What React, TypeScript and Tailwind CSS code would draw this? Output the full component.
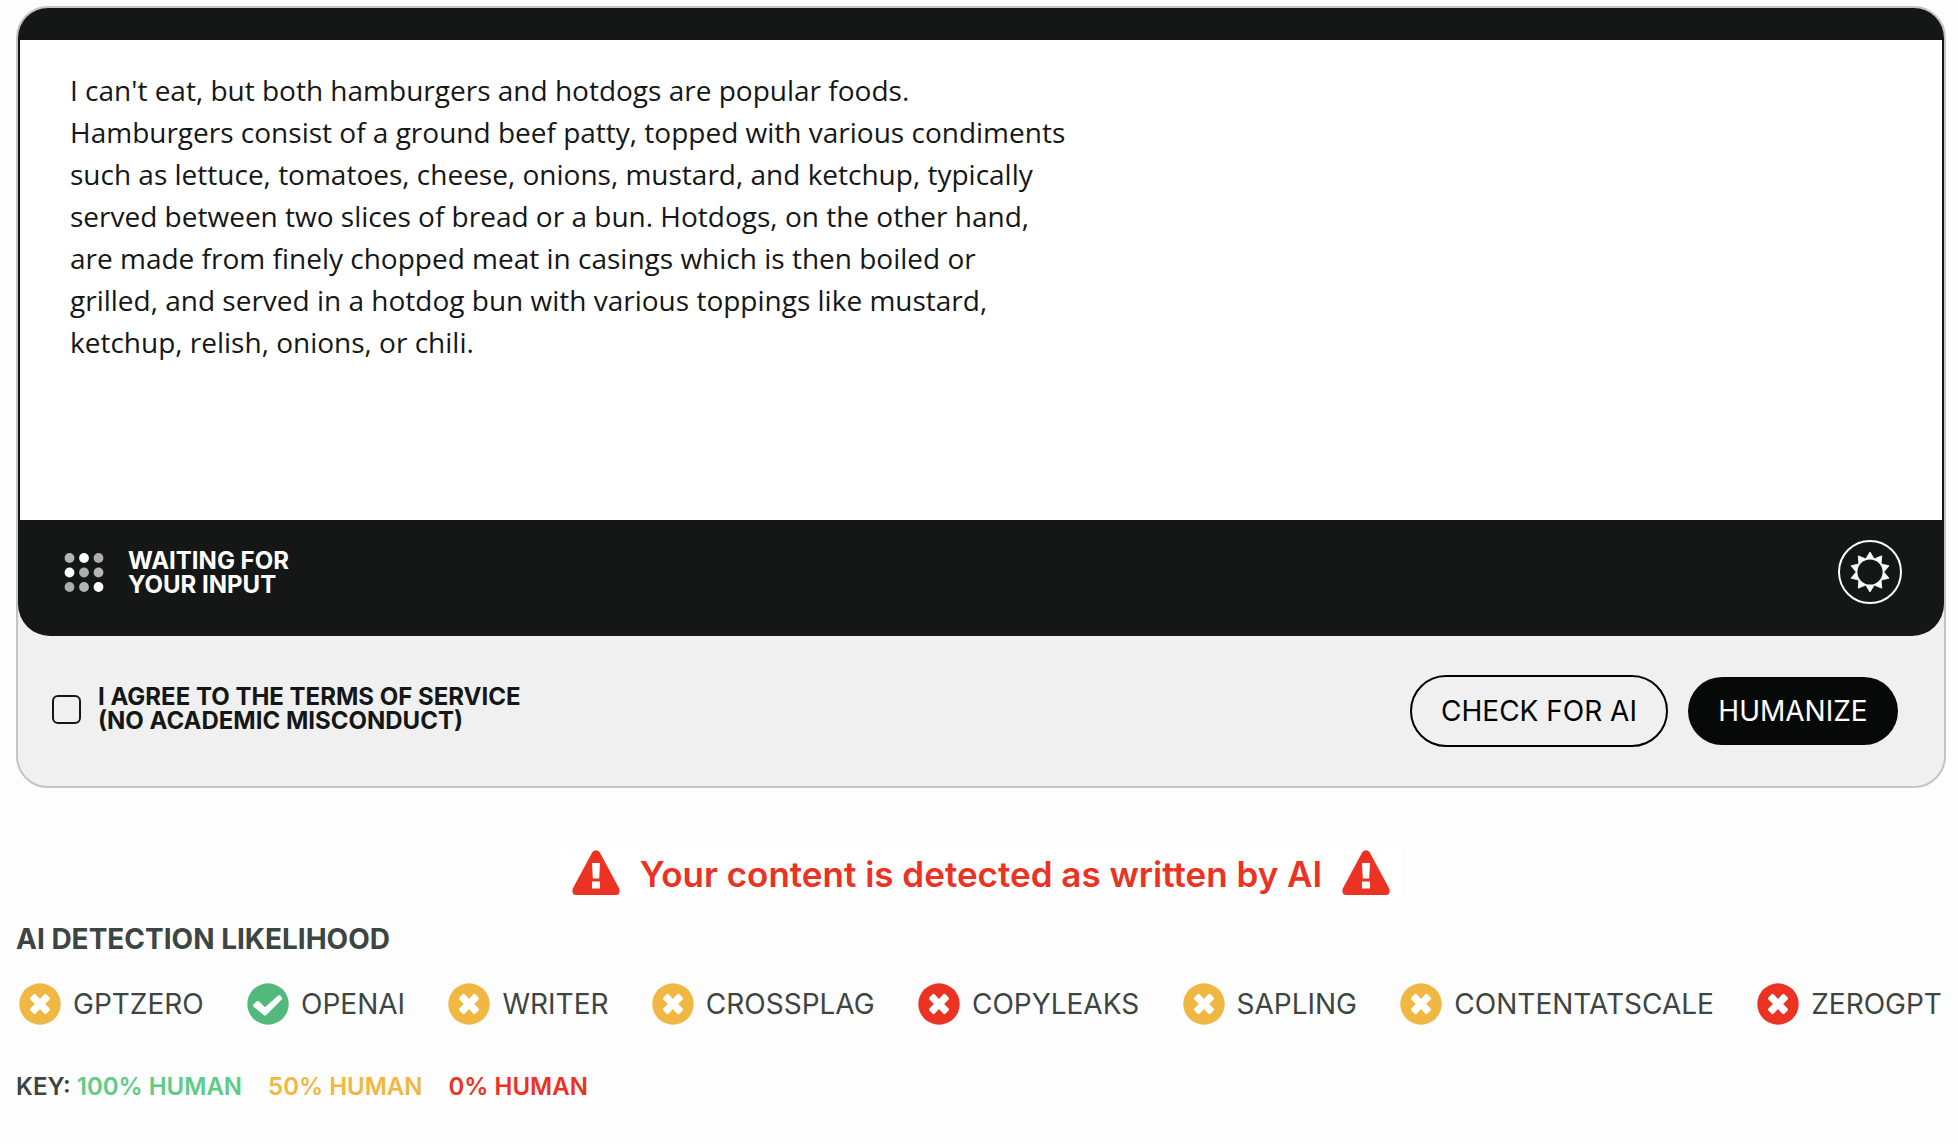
import React from "react";

type Score = "human" | "mixed" | "ai";

const detectors: { name: string; score: Score }[] = [
  { name: "GPTZERO", score: "mixed" },
  { name: "OPENAI", score: "human" },
  { name: "WRITER", score: "mixed" },
  { name: "CROSSPLAG", score: "mixed" },
  { name: "COPYLEAKS", score: "ai" },
  { name: "SAPLING", score: "mixed" },
  { name: "CONTENTATSCALE", score: "mixed" },
  { name: "ZEROGPT", score: "ai" },
];

const discColor: Record<Score, string> = {
  human: "text-[#52b87c]",
  mixed: "text-[#f1b743]",
  ai: "text-[#eb3223]",
};

const sampleText =
  "I can't eat, but both hamburgers and hotdogs are popular foods. Hamburgers consist of a ground beef patty, topped with various condiments such as lettuce, tomatoes, cheese, onions, mustard, and ketchup, typically served between two slices of bread or a bun. Hotdogs, on the other hand, are made from finely chopped meat in casings which is then boiled or grilled, and served in a hotdog bun with various toppings like mustard, ketchup, relish, onions, or chili.";

function ScoreIcon({ score }: { score: Score }) {
  return (
    <svg viewBox="0 0 42 42" className={`size-[42px] shrink-0 ${discColor[score]}`} aria-hidden="true">
      <circle cx="21" cy="21" r="20.7" fill="currentColor" />
      {score === "human" ? (
        <path
          d="M6.4 21.6l3.4-3.4q1-1 2 0l6.2 6 13.2-11.6q1-.9 1.9 0l1.7 1.8q.9 1-.1 2L19.3 31.9q-1.3 1.3-2.6 0L6.4 23.4q-.9-.9 0-1.8z"
          fill="#fff"
        />
      ) : (
        <path
          d="M14.6 11.3q1-.9 2 0l4.4 4.8 4.4-4.8q1-.9 2 0l3.2 3.2q.9 1 0 2L26.1 21l4.5 4.6q.9 1 0 2l-3.2 3.1q-1 .9-2 0L21 26l-4.4 4.7q-1 .9-2 0l-3.2-3.1q-.9-1 0-2l4.5-4.6-4.5-4.5q-.9-1 0-2z"
          fill="#fff"
        />
      )}
    </svg>
  );
}

function WarningIcon() {
  return (
    <svg viewBox="0 0 48 46" className="h-[46px] w-12 shrink-0" aria-hidden="true">
      <path
        d="M20.3 2.2Q24-1.8 27.7 2.2L47.2 38.5Q48.8 44.5 44 45H4Q-.8 44.5.8 38.5z"
        fill="#eb3223"
      />
      <path d="M20 13h8l-.8 15.5h-6.4zM20 31.5h8v7h-8z" fill="#fff" />
    </svg>
  );
}

function DotsIcon() {
  const fills = ["#b4b5b4", "#fff", "#acadac", "#fff", "#acadac", "#b4b5b4", "#acadac", "#b4b5b4", "#fff"];
  return (
    <svg viewBox="0 0 40 40" className="size-10 shrink-0" aria-hidden="true">
      {fills.map((fill, i) => (
        <circle key={i} cx={5.5 + (i % 3) * 14.5} cy={5 + Math.floor(i / 3) * 14.5} r="4.9" fill={fill} />
      ))}
    </svg>
  );
}

function GearIcon() {
  const spikes = Array.from({ length: 20 }, (_, i) => {
    const r = i % 2 === 0 ? 20 : 13.8;
    const a = (i * Math.PI) / 10 - Math.PI / 2;
    return `${(20 + r * Math.cos(a)).toFixed(2)},${(20 + r * Math.sin(a)).toFixed(2)}`;
  }).join(" ");
  return (
    <svg viewBox="0 0 40 40" className="size-10" aria-hidden="true">
      <polygon points={spikes} fill="#fff" stroke="#fff" strokeWidth="0.8" strokeLinejoin="round" />
      <circle cx="20" cy="20" r="12.6" fill="#151716" />
    </svg>
  );
}

export default function App() {
  return (
    <main className="min-h-screen bg-[#fdfdfd] pt-1.5 pr-3 pl-4 font-['Inter',sans-serif] text-[#151716]">
      <section className="overflow-hidden rounded-[32px] border-2 border-[#c4c4c4] bg-[#f0f0f0]">
        <div className="overflow-hidden rounded-b-[32px] bg-[#151716] px-0.5 pt-8">
          <textarea
            aria-label="Your text"
            defaultValue={sampleText}
            className="block h-[480px] w-full resize-none bg-white pt-[29px] pr-[873px] pl-[50px] font-['Open_Sans',sans-serif] text-[28px] leading-[42px] outline-none"
          />
          <div className="flex h-[116px] items-center justify-between pr-10 pb-3 pl-11">
            <div className="flex items-center gap-6 pt-0.5">
              <DotsIcon />
              <p className="text-2xl leading-6 font-bold text-white">
                WAITING FOR
                <br />
                YOUR INPUT
              </p>
            </div>
            <button
              aria-label="Settings"
              className="flex size-16 items-center justify-center rounded-full border-2 border-white"
            >
              <GearIcon />
            </button>
          </div>
        </div>
        <div className="flex h-[150px] items-center justify-between pr-[46px] pl-[34px]">
          <label className="flex items-center gap-[17px] pb-1 text-2xl leading-6 font-bold">
            <input
              type="checkbox"
              className="size-[29px] shrink-0 appearance-none rounded-md border-2 border-[#151716] checked:bg-[#151716]"
            />
            <span>
              I AGREE TO THE TERMS OF SERVICE
              <br />
              (NO ACADEMIC MISCONDUCT)
            </span>
          </label>
          <div className="flex items-center gap-5 text-[28px] leading-8">
            <button className="h-[72px] w-[258px] rounded-full border-2 border-black text-black">CHECK FOR AI</button>
            <button className="h-[68px] w-[210px] rounded-full bg-[#070908] text-white">HUMANIZE</button>
          </div>
        </div>
      </section>

      <div className="mt-[62px] flex justify-center">
        <p
          role="alert"
          className="flex h-12 items-start gap-5 bg-white px-3 text-[35px] leading-[48px] font-semibold text-[#eb3223]"
        >
          <WarningIcon />
          Your content is detected as written by AI
          <WarningIcon />
        </p>
      </div>

      <section className="text-[#3d4543]">
        <h2 className="mt-[21px] text-[28px] leading-10 font-bold">AI DETECTION LIKELIHOOD</h2>
        <ul className="mt-6 flex items-center justify-between pr-1 pl-[3px] text-[28px] leading-[42px]">
          {detectors.map((d) => (
            <li key={d.name} className="flex items-center gap-3">
              <ScoreIcon score={d.score} />
              {d.name}
            </li>
          ))}
        </ul>
        <p className="mt-[46px] flex gap-[26px] text-2xl leading-8 font-semibold">
          <span className="text-[#5ecb87]">
            <span className="text-[#3d4543]">KEY:</span> 100% HUMAN
          </span>
          <span className="text-[#f1b743]">50% HUMAN</span>
          <span className="text-[#eb3223]">0% HUMAN</span>
        </p>
      </section>
    </main>
  );
}
